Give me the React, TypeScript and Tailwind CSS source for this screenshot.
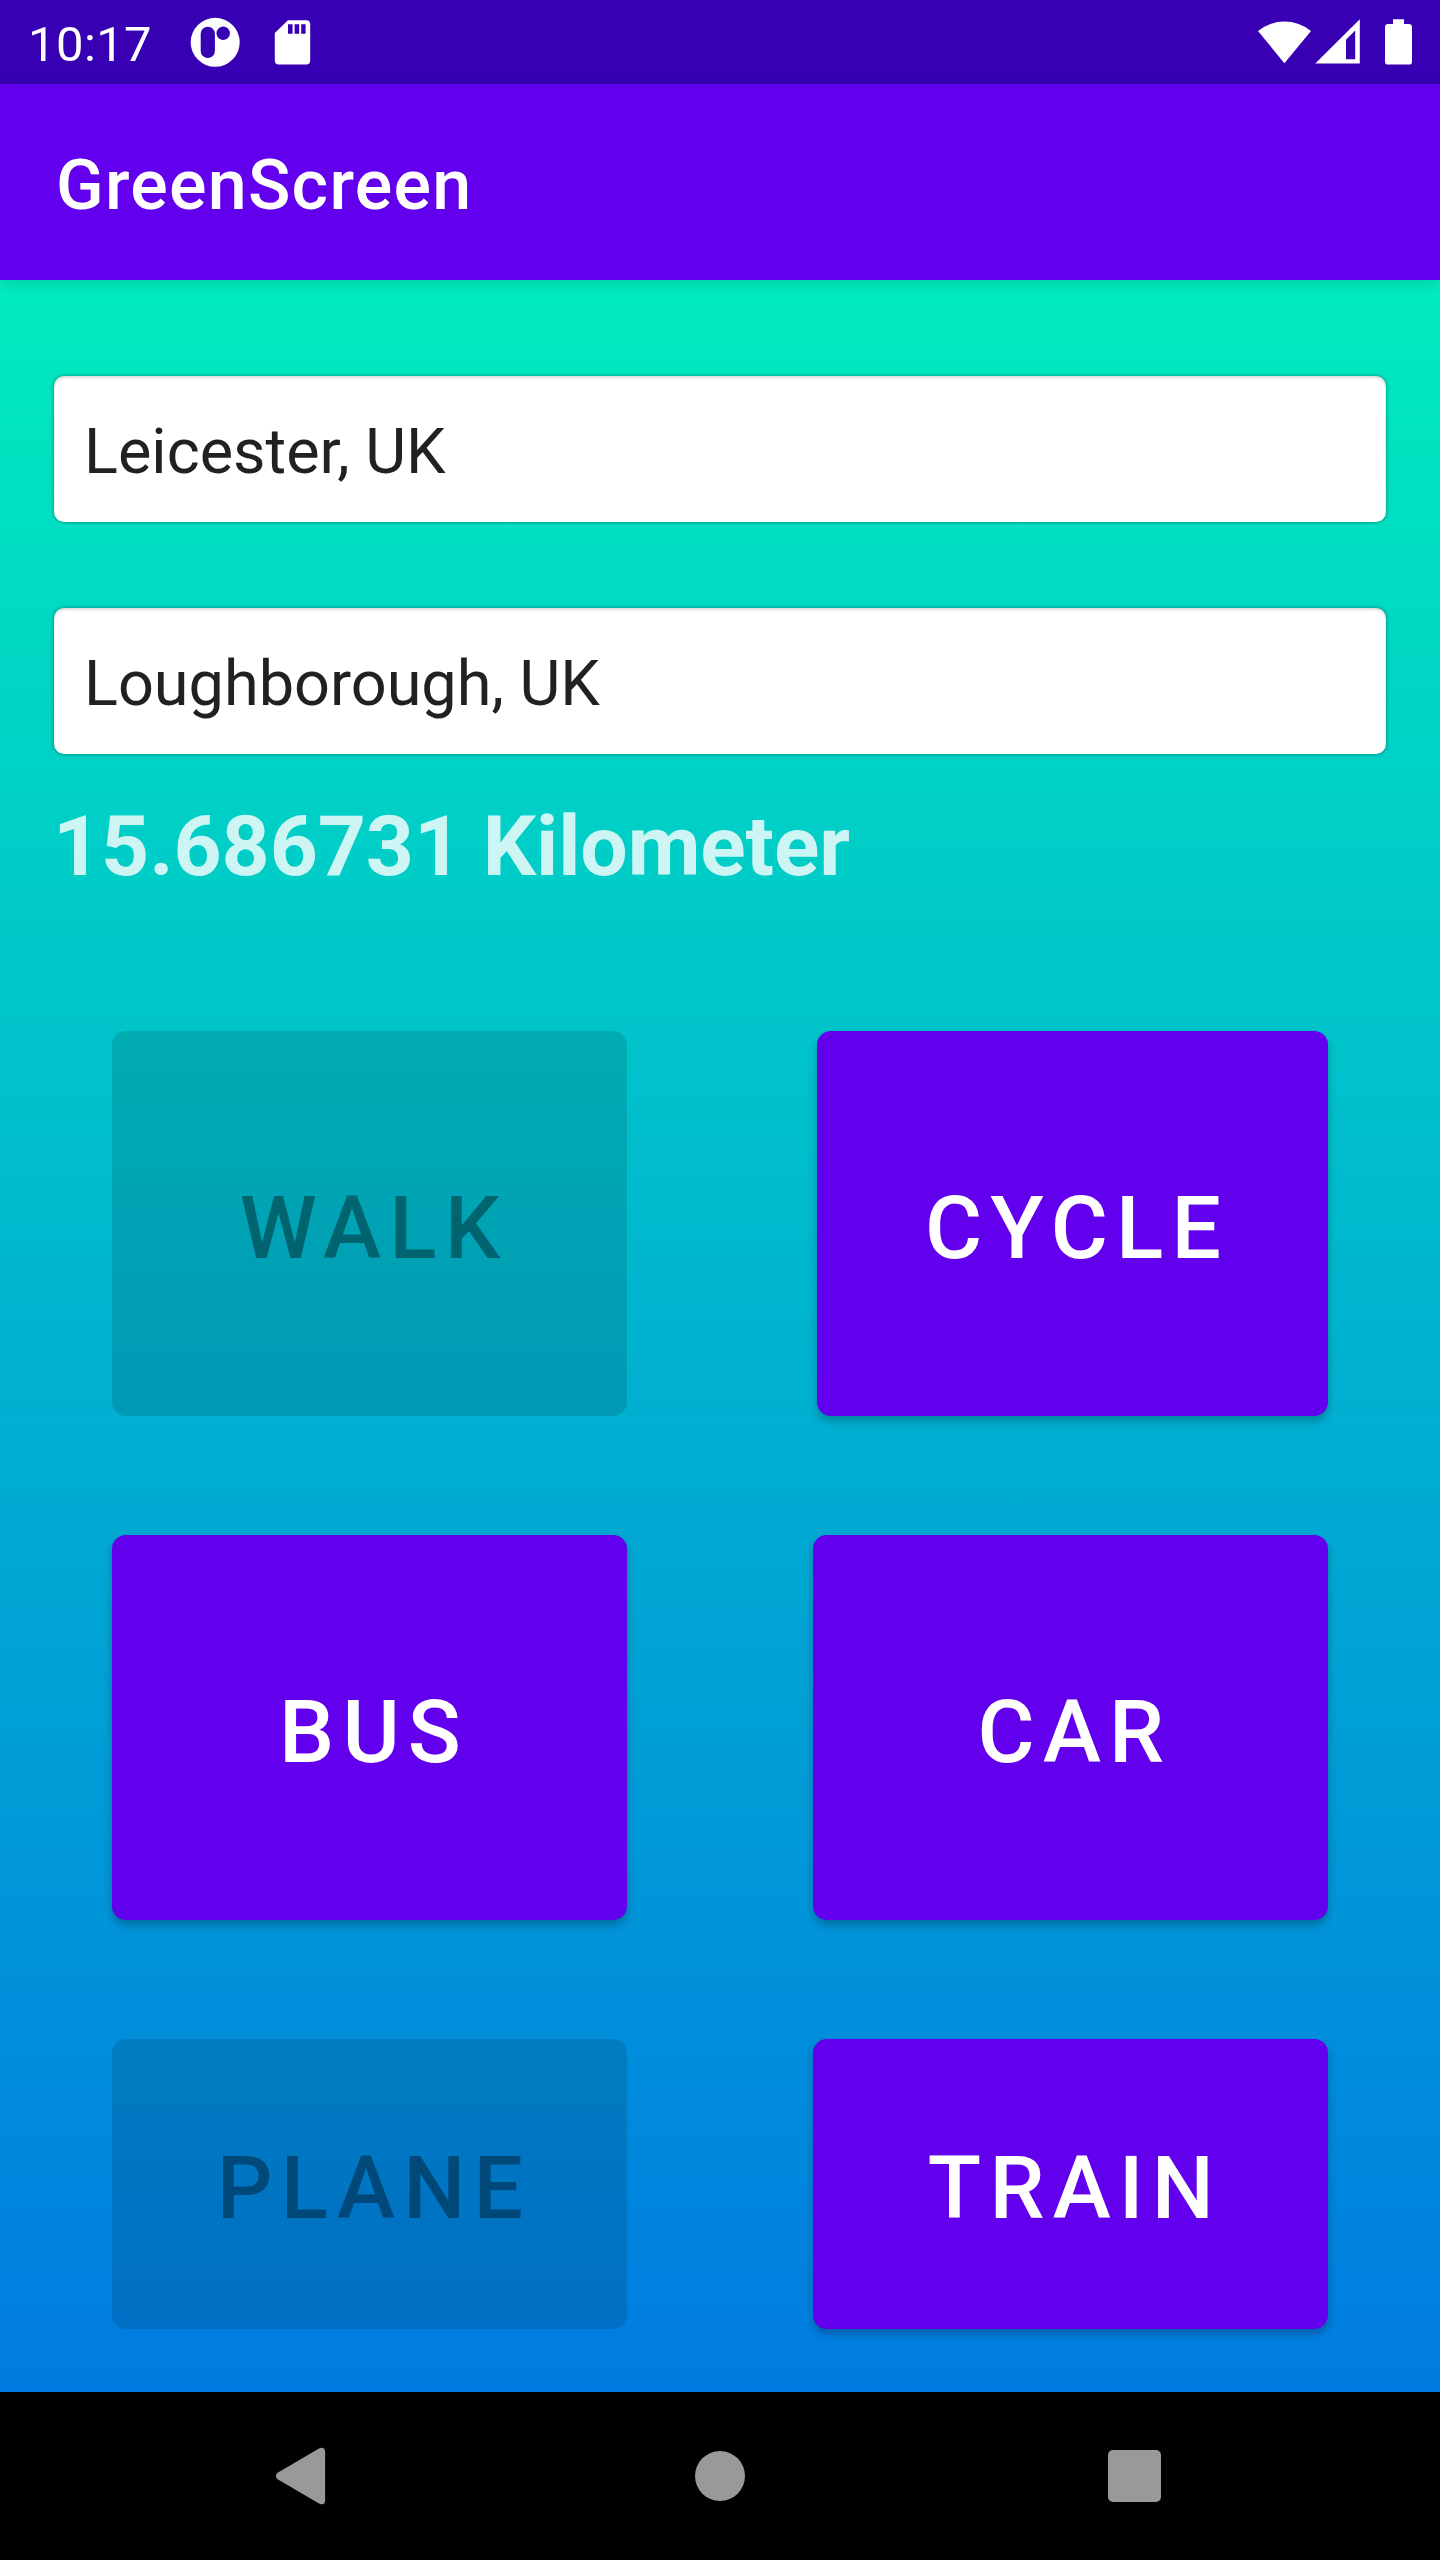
import React from 'react';
import clsx from 'clsx';

interface TransportOption {
  label: string;
  enabled: boolean;
  className: string;
}

const TRANSPORT_ROWS: TransportOption[][] = [
  [
    { label: 'Walk', enabled: false, className: 'w-[515px] h-[385px]' },
    { label: 'Cycle', enabled: true, className: 'w-[511px] h-[385px]' },
  ],
  [
    { label: 'Bus', enabled: true, className: 'w-[515px] h-[385px]' },
    { label: 'Car', enabled: true, className: 'w-[515px] h-[385px]' },
  ],
  [
    { label: 'Plane', enabled: false, className: 'w-[515px] h-[290px]' },
    { label: 'Train', enabled: true, className: 'w-[515px] h-[290px]' },
  ],
];

const StatusBar: React.FC = () => (
  <div className="flex h-[84px] items-start bg-[#3700b3] pl-[28px] pr-[28px] text-white">
    <span className="h-[84px] w-[162px] pt-[4px] text-[49px] leading-[81px] tracking-[0.4px]">
      10:17
    </span>
    <svg className="mt-[17px] h-[50px] w-[50px]" viewBox="190 17 50 50" fill="currentColor">
      <circle cx="215.2" cy="42.3" r="24.5" />
      <rect x="200.7" y="26.7" width="14.2" height="31.4" rx="7.1" className="fill-[#3700b3]" />
      <circle cx="223.2" cy="33.3" r="6.7" className="fill-[#3700b3]" />
    </svg>
    <svg className="ml-[34px] mt-[19px] h-[47px] w-[37px]" viewBox="274 19 37 47">
      <path
        fill="currentColor"
        d="M288 20.2h18.2a4 4 0 0 1 4 4v36.3a4 4 0 0 1-4 4h-27.4a4 4 0 0 1-4-4V33z"
      />
      <path className="fill-[#3700b3]" d="M288 24.3h4.6v9.5H288zM294.6 24.3h4.6v9.5h-4.6zM301.2 24.3h4.4v9.5h-4.4z" />
    </svg>
    <div className="ml-auto flex">
      <svg className="mt-[17px] h-[48px] w-[54px]" viewBox="1258 17 54 48" fill="currentColor">
        <path d="M1258 31a42 42 0 0 1 53 0l-26.6 32.2z" />
      </svg>
      <svg className="ml-[3px] mt-[17px] h-[48px] w-[45px]" viewBox="1315 17 45 48" fill="currentColor">
        <path
          fillRule="evenodd"
          d="M1315.3 63.6 1359.8 19.3v44.3zM1346 39.7v19.5h9.2V30.5z"
        />
      </svg>
      <svg className="ml-[25px] mt-[17px] h-[48px] w-[27px]" viewBox="1385 17 27 48" fill="currentColor">
        <path d="M1393 19.3h11V24h4.8a3.2 3.2 0 0 1 3.2 3.2v34.2a3.2 3.2 0 0 1-3.2 3.2h-20.6a3.2 3.2 0 0 1-3.2-3.2V27.2a3.2 3.2 0 0 1 3.2-3.2h4.8z" />
      </svg>
    </div>
  </div>
);

const AppBar: React.FC<{ title: string }> = ({ title }) => (
  <header className="relative flex h-[196px] items-center bg-[#6200ee] pl-[56px] pt-[6px] shadow-[0_4px_14px_rgba(0,0,0,0.12)]">
    <h1 className="text-[70px] font-medium leading-[82px] tracking-[1.25px] text-white">{title}</h1>
  </header>
);

const PlaceField: React.FC<{ value: string }> = ({ value }) => (
  <div className="flex h-[146px] items-center rounded-[10px] bg-white pl-[30px] pt-[6px] text-[63px] leading-[74px] text-[#212121] shadow-[0_0_4px_rgba(0,0,0,0.4),inset_0_2px_3px_rgba(0,0,0,0.15)]">
    {value}
  </div>
);

const TransportButton: React.FC<TransportOption> = ({ label, enabled, className }) => (
  <button
    type="button"
    disabled={!enabled}
    className={clsx(
      'rounded-[14px] pl-[9px] pt-[8px] text-[87.5px] font-medium uppercase leading-[102px] tracking-[8.2px]',
      enabled
        ? 'bg-[#6200ee] text-white shadow-[0_5px_9px_rgba(0,0,0,0.25)]'
        : 'bg-black/[0.12] text-black/[0.38]',
      className
    )}
  >
    {label}
  </button>
);

const NavigationBar: React.FC = () => (
  <nav className="flex h-[168px] items-center bg-black pl-[275px] text-[#999999]">
    <svg className="h-[58px] w-[51px]" viewBox="275 2447 51 58" fill="currentColor">
      <path d="M277.6 2472.8 319 2448.4c3.2-1.7 6.1-.4 6.1 3.2v48.8c0 3.6-2.9 4.9-6.1 3.2l-41.4-24.4c-2.3-1.7-2.3-4.7 0-6.4z" />
    </svg>
    <div className="ml-[369px] h-[50px] w-[50px] rounded-full bg-[#999999]" />
    <div className="ml-[363px] h-[52px] w-[53px] rounded-[5px] bg-[#999999]" />
  </nav>
);

export default function App() {
  return (
    <div className="flex h-[2560px] w-[1440px] flex-col overflow-hidden font-['Roboto',sans-serif]">
      <StatusBar />
      <AppBar title="GreenScreen" />

      <main className="flex h-[2112px] flex-col bg-[linear-gradient(180deg,#00ecbe_0%,#007be1_100%)] pt-[96px]">
        <div className="flex flex-col gap-[86px] px-[54px]">
          <PlaceField value="Leicester, UK" />
          <PlaceField value="Loughborough, UK" />
        </div>

        <p className="mt-[44px] pl-[53px] text-[84px] font-bold leading-[98px] tracking-[-0.1px] text-white/80">
          15.686731 Kilometer
        </p>

        <div className="mt-[135px] flex flex-col gap-[119px] px-[112px]">
          {TRANSPORT_ROWS.map((row) => (
            <div key={row[0].label} className="flex justify-between">
              {row.map((option) => (
                <TransportButton key={option.label} {...option} />
              ))}
            </div>
          ))}
        </div>
      </main>

      <NavigationBar />
    </div>
  );
}
